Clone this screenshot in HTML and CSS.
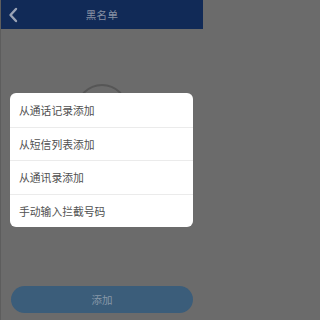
FILE: index.html
```html
<!DOCTYPE html>
<html lang="zh">
<head>
<meta charset="utf-8">
<link rel="stylesheet" href="styles.css">
</head>
<body>
<div class="app">
  <header class="topbar">
    <span class="back">
      <svg width="12" height="16" viewBox="0 0 12 16"><polyline points="8,2 2.5,8 8,14" fill="none" stroke="#9aa3b5" stroke-width="2.4" stroke-linecap="round" stroke-linejoin="round"/></svg>
    </span>
    <h1 class="title">黑名单</h1>
  </header>
  <main class="content">
    <div class="empty-icon"></div>
  </main>
  <footer class="footer">
    <button class="add-btn">添加</button>
  </footer>
  <div class="overlay">
    <ul class="menu">
      <li class="menu-item">从通话记录添加</li>
      <li class="menu-item">从短信列表添加</li>
      <li class="menu-item">从通讯录添加</li>
      <li class="menu-item">手动输入拦截号码</li>
    </ul>
  </div>
</div>
</body>
</html>
```
FILE: styles.css
```css
* { box-sizing: border-box; }
html, body { margin: 0; padding: 0; }
body {
  font-family: "Noto Sans CJK SC", "Noto Sans", sans-serif;
  background: #6b6b6b;
}
.app {
  position: relative;
  width: 203px;
  height: 320px;
  display: flex;
  flex-direction: column;
  background: #6b6b6b;
  border-left: 1px solid #5d5d5d;
  overflow: hidden;
}
.topbar {
  position: relative;
  height: 29px;
  flex: none;
  background: #112a57;
  display: flex;
  align-items: center;
  justify-content: center;
}
.back {
  position: absolute;
  left: 7px;
  top: 7px;
  display: flex;
}
.title {
  margin: 0;
  font-size: 10.5px;
  font-weight: normal;
  color: #8790a3;
  letter-spacing: 0.3px;
}
.content {
  flex: 1;
  display: flex;
  justify-content: center;
}
.empty-icon {
  margin-top: 55px;
  width: 52px;
  height: 52px;
  border-radius: 50%;
  border: 2px solid #565656;
}
.footer {
  flex: none;
  padding: 0 10px 7px 10px;
}
.add-btn {
  display: block;
  width: 100%;
  height: 27px;
  border: none;
  border-radius: 14px;
  background: #3b5d7a;
  color: #8798a8;
  font-family: inherit;
  font-size: 10.5px;
  padding: 0;
}
.overlay {
  position: absolute;
  inset: 0;
  padding: 93px 10px 0 9px;
}
.menu {
  list-style: none;
  margin: 0;
  padding: 0;
  background: #fff;
  border-radius: 6px;
  overflow: hidden;
}
.menu-item {
  height: 33.5px;
  display: flex;
  align-items: center;
  padding-left: 9px;
  font-size: 10.8px;
  color: #505050;
  border-top: 1px solid #ebebeb;
}
.menu-item:first-child { border-top: none; }
```
